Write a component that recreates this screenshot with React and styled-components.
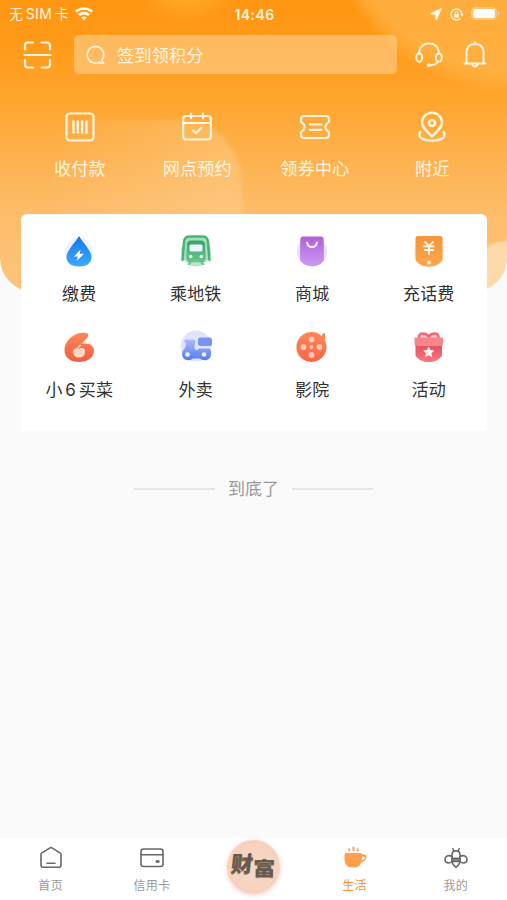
import React from "react";
import styled, { createGlobalStyle } from "styled-components";

const GlobalStyle = createGlobalStyle`
  * {
    box-sizing: border-box;
  }

  body {
    margin: 0;
    background: #fafafa;
    font-family: Inter, "Noto Sans CJK SC", sans-serif;
    color: #333;
  }

  svg {
    display: block;
    flex: none;
    overflow: visible;
  }
`;

const Page = styled.div`
  display: flex;
  flex-direction: column;
  width: 507px;
  height: 900px;
  overflow: hidden;
`;

const Header = styled.header`
  display: grid;
  height: 292px;
  flex: none;
  border-radius: 0 0 34px 34px;
  color: #fff4df;
  background:
    radial-gradient(circle at 507px 276px, rgba(252, 226, 190, 0.75) 33px, transparent 37px),
    radial-gradient(ellipse 46px 27px at 186px -5px, rgba(255, 182, 58, 0.6) 0%, rgba(255, 176, 48, 0.4) 60%, transparent 100%),
    radial-gradient(circle at 510px -95px, rgba(255, 183, 78, 0.7) 165px, rgba(255, 183, 78, 0.45) 176px, transparent 187px),
    linear-gradient(180deg, #ff9612 0px, #ff9a18 40px, #ffa42b 95px, #fdb04a 150px, #fdbc68 210px, #fdc57c 292px);

  > * {
    grid-area: 1 / 1;
    min-width: 0;
  }
`;

/* soft highlight behind the second shortcut */
const Glow = styled.div`
  width: 243px;
  height: 110px;
  margin-top: 120px;
  border-radius: 0 56px 0 0 / 0 72px 0 0;
  background: linear-gradient(100deg, transparent 50px, rgba(255, 214, 160, 0.38) 235px);
  filter: blur(2px);
`;

const HeaderContent = styled.div`
  isolation: isolate;
`;

const StatusBar = styled.div`
  display: grid;
  grid-template-columns: 1fr auto 1fr;
  align-items: center;
  height: 28px;
  padding: 0 7px 0 9px;
  font-size: 14.5px;
`;

const StatusGroup = styled.div`
  display: flex;
  align-items: center;
  justify-content: ${(props) => (props.$end ? "flex-end" : "flex-start")};
  gap: ${(props) => (props.$end ? "8px" : "6px")};
  line-height: 20px;
  white-space: nowrap;
`;

const Carrier = styled.span`
  font-size: 14px;
  letter-spacing: 0.4px;
  word-spacing: -2px;
`;

const Clock = styled.span`
  font-size: 14px;
  font-weight: 600;
  letter-spacing: 0.4px;
`;

const SearchRow = styled.div`
  display: flex;
  align-items: center;
  height: 39px;
  margin-top: 7px;
  padding: 0 19px 0 23px;
`;

const SearchBox = styled.div`
  display: flex;
  align-items: center;
  gap: 12px;
  width: 323px;
  height: 39px;
  margin: 0 18px 0 22px;
  padding: 0 12px;
  border-radius: 5px;
  background: rgba(255, 222, 178, 0.46);
  font-size: 17.3px;
`;

const HeaderIcons = styled.div`
  display: flex;
  align-items: center;
  gap: 20px;
`;

const QuickGrid = styled.nav`
  display: grid;
  grid-template-columns: repeat(4, 1fr);
  margin: 38px 16px 0 21px;
`;

const QuickItem = styled.div`
  display: flex;
  flex-direction: column;
  align-items: center;
  gap: 14px;
  font-size: 17.2px;
  line-height: 26px;
`;

const Card = styled.section`
  position: relative;
  display: grid;
  grid-template-columns: repeat(4, 1fr);
  grid-auto-rows: 95px;
  width: 466px;
  height: 217px;
  flex: none;
  margin: -78px 0 0 21px;
  padding-top: 20px;
  border-radius: 6px 6px 2px 2px;
  background: #fff;
`;

const ServiceItem = styled.div`
  display: flex;
  flex-direction: column;
  align-items: center;
  gap: 13px;
  padding-top: ${(props) => (props.$lower ? "1px" : "0")};
  font-size: 17px;
  line-height: 26px;
  letter-spacing: 0.2px;
  word-spacing: -2.3px;
`;

const EndLine = styled.div`
  display: flex;
  align-items: center;
  justify-content: center;
  gap: 13px;
  margin-top: 45px;
  color: #999;
  font-size: 17px;
  line-height: 26px;

  &::before,
  &::after {
    content: "";
    width: 81px;
    height: 2px;
    background: #e6e6e6;
  }
`;

const TabBar = styled.footer`
  display: grid;
  grid-template-columns: repeat(5, 101.3px);
  height: 62px;
  margin-top: auto;
  background: #fff;
`;

const Tab = styled.div`
  display: flex;
  flex-direction: column;
  align-items: center;
  gap: 8px;
  padding-top: 8px;
  color: ${(props) => (props.$active ? "#f99238" : "#999")};
  font-size: 12px;
  line-height: 18px;
  letter-spacing: 0.3px;
`;

const WealthButton = styled.div`
  display: flex;
  align-items: center;
  justify-content: center;
  width: 53px;
  height: 54px;
  margin: 2px auto 0;
  border-radius: 50%;
  background: radial-gradient(circle at 50% 55%, #f5d9c7 0%, #f8d1bf 65%, #f9c5b6 100%);
  box-shadow: 0 1px 4px rgba(250, 150, 135, 0.5);
  color: #675a4f;
  font-size: 22px;
  font-weight: 900;
  line-height: 30px;
  text-shadow: 0 1px 0 #a59382;
`;

const WealthChar = styled.span`
  transform: ${(props) => (props.$low ? "translateY(1px) scaleY(0.85)" : "translateY(-3px) skewX(-6deg)")};
`;

const line = {
  fill: "none",
  stroke: "#fff4df",
  strokeWidth: 2.2,
  strokeLinecap: "round",
  strokeLinejoin: "round",
};

const WifiIcon = () => (
  <svg width="18" height="14" viewBox="0 0 18 14" fill="none" stroke="#fff8e8" strokeWidth="2.6">
    <path d="M.9 4.8C5.5.4 12.5.4 17.1 4.8" />
    <path d="M4 8.1C6.8 5.4 11.2 5.4 14 8.1" />
    <path d="M9 13.6 6.2 10.6C7.7 9.2 10.3 9.2 11.8 10.6Z" fill="#fff8e8" stroke="none" />
  </svg>
);

const LocationIcon = () => (
  <svg width="12" height="12" viewBox="0 0 12 12" fill="#fff8e8">
    <path d="M11.7.3 6.9 11.3Q6 12.3 5.7 10.9V6.4H1.1Q-.3 6 .8 5.1Z" stroke="#fff8e8" strokeWidth=".5" />
  </svg>
);

const RotationLockIcon = () => (
  <svg width="13" height="13" viewBox="0 0 13 13" fill="none" stroke="#fff4df" strokeWidth="1.3">
    <path d="M10.3 10.5A5.5 5.5 0 1 1 12 6.5" />
    <path d="M10.1 6.1H13.6L11.9 8.5Z" fill="#fff4df" stroke="none" />
    <rect x="4" y="6" width="5" height="3.7" rx=".6" fill="#fff4df" stroke="none" />
    <path d="M5 6V4.9A1.5 1.5 0 0 1 8 4.9V6" strokeWidth="1" />
  </svg>
);

const BatteryIcon = () => (
  <svg width="29" height="14" viewBox="0 0 29 14">
    <rect x=".5" y=".5" width="25" height="12" rx="4" fill="#ffc36f" stroke="#ffcb84" />
    <path d="M27 4.5Q30 6.5 27 9Z" fill="#ffd090" />
    <rect x="2.3" y="2" width="21.5" height="9" rx="2" fill="#fff" />
  </svg>
);

const ScanIcon = () => (
  <svg width="29" height="28" viewBox="0 0 29 28" {...line}>
    <path d="M2 8.5V4.5Q2 1.5 5 1.5H10M18.5 1.5H24Q27 1.5 27 4.5V8.5M2 19V23.5Q2 26.5 5 26.5H10M18.5 26.5H24Q27 26.5 27 23.5V19M1.5 14H27.5" />
  </svg>
);

const SearchIcon = () => (
  <svg width="19" height="20" viewBox="0 0 19 20" {...line} strokeWidth="1.5">
    <path d="M14 16.8A8.3 8.3 0 1 1 17.5 12C17 13.5 16.5 14.5 15.8 15.3L17.7 18.3H14" />
  </svg>
);

const HeadsetIcon = () => (
  <svg width="28" height="26" viewBox="0 0 28 26" {...line} strokeWidth="1.9">
    <path d="M4 12V10.5C5 4 9 1.5 14 1.5S23 4 24 10.5V12" />
    <ellipse cx="4.2" cy="15.5" rx="3" ry="4.2" />
    <ellipse cx="23.8" cy="15.5" rx="3" ry="4.2" />
    <path d="M23 19.7C21.5 22 19 23 15 23.2" />
    <circle cx="13.8" cy="23.2" r="1" fill="#fff4df" />
  </svg>
);

const BellIcon = () => (
  <svg width="24" height="27" viewBox="0 0 24 27" {...line} strokeWidth="2">
    <path d="M1.5 22.5H22.5M3.5 22V12C3.5 6 7 3 12 3S20.5 6 20.5 12V22M12 3V1.5" />
    <path d="M9.5 23.5C10 26 14 26 14.5 23.5" />
  </svg>
);

const BarcodeIcon = () => (
  <svg width="30" height="30" viewBox="0 0 30 30" {...line}>
    <rect x="1.5" y="1.5" width="27" height="27" rx="3.5" />
    <path d="M8.5 8.5V21.5M12.8 8.5V21.5M17.1 8.5V21.5M21.4 8.5V21.5" strokeWidth="2.4" strokeLinecap="butt" />
  </svg>
);

const CalendarIcon = () => (
  <svg width="30" height="30" viewBox="0 0 30 30" {...line}>
    <rect x="1.2" y="4" width="27.6" height="23.5" rx="3" />
    <path d="M1.5 11H28.5M9 1.7V6.3M21 1.7V6.3M11 18.5 14 21.2 19.5 15.8" />
  </svg>
);

const TicketIcon = () => (
  <svg width="30" height="30" viewBox="0 0 30 30" {...line}>
    <path d="M4 4H26Q29 4 29 7V9.5Q29 10.5 27.5 11.2C24.5 13 24.5 17 27.5 18.8Q29 19.5 29 20.5V23Q29 26 26 26H4Q1 26 1 23V20.5Q1 19.5 2.5 18.8C5.5 17 5.5 13 2.5 11.2Q1 10.5 1 9.5V7Q1 4 4 4Z" />
    <path d="M10 12.3H21.5M10 17.8H21.5" />
  </svg>
);

const NearbyIcon = () => (
  <svg width="28" height="30" viewBox="0 0 28 30" {...line} strokeWidth="2.4">
    <path d="M14 24.5C9 19.5 4 15.5 4 10.3A10 9.5 0 0 1 24 10.3C24 15.5 19 19.5 14 24.5Z" />
    <circle cx="14" cy="11" r="3" />
    <path d="M2.3 20C-1.5 26.5 7 28.7 14 28.7S29.5 26.5 25.7 20" />
  </svg>
);

const Gradient = ({ id, from, to }) => (
  <defs>
    <linearGradient id={id} x1="0" y1="0" x2="0" y2="1">
      <stop stopColor={from} />
      <stop offset="1" stopColor={to} />
    </linearGradient>
  </defs>
);

const UtilityIcon = () => (
  <svg width="34" height="34" viewBox="0 0 34 34">
    <Gradient id="drop" from="#1478ef" to="#3da9fc" />
    <circle cx="17" cy="18" r="14.5" fill="#f3f3ff" />
    <path d="M17 2C21 8.5 29.5 17 29.5 23C29.5 29.5 24 32.5 17 32.5S4.5 29.5 4.5 23C4.5 17 13 8.5 17 2Z" fill="url(#drop)" />
    <path d="M18.5 15.5 12 22.5H16L15 26.8 22 19.7H17.6Z" fill="#fff" />
  </svg>
);

const MetroIcon = () => (
  <svg width="34" height="34" viewBox="0 0 34 34">
    <Gradient id="train" from="#35a568" to="#70c993" />
    <circle cx="17" cy="17.5" r="15" fill="#c7ecd5" />
    <path d="M3.5 26 5 8Q5.5 2.5 10 2.5H24Q28.5 2.5 29 8L30.5 26" fill="#a5dfbb" stroke="#46b477" strokeWidth="2.5" strokeLinecap="round" />
    <path d="M12 6.5H22Q25.5 6.5 26 10L26.7 24.5Q26.7 28 24 28L25.5 31H22L20.5 28.5H13.5L12 31H8.5L10 28Q7.3 28 7.3 24.5L8 10Q8.5 6.5 12 6.5Z" fill="url(#train)" />
    <rect x="10.5" y="10.5" width="13" height="7" rx="1.5" fill="#edf2ff" />
    <circle cx="11.7" cy="22.5" r="1.7" fill="#effff5" />
    <circle cx="22.3" cy="22.5" r="1.7" fill="#effff5" />
    <path d="M11 31 12.5 28.5H21.5L23 31Q17 33.5 11 31Z" fill="#b6e5c7" />
  </svg>
);

const MallIcon = () => (
  <svg width="34" height="34" viewBox="0 0 34 34">
    <Gradient id="bag" from="#ad61d8" to="#cc9bf3" />
    <circle cx="17" cy="17.5" r="15" fill="#eadcfb" />
    <path d="M8 2.5H26Q28.5 2.5 28.7 5.5L29 26C26 30.5 22 32.3 17 32.3S8 30.5 5 26L5.3 5.5Q5.5 2.5 8 2.5Z" fill="url(#bag)" />
    <path d="M12 8.5C13 14.5 21 14.5 22 8.5" fill="none" stroke="#f7e9ff" strokeWidth="2" strokeLinecap="round" />
  </svg>
);

const RechargeIcon = () => (
  <svg width="34" height="34" viewBox="0 0 34 34">
    <Gradient id="phone" from="#f49538" to="#ffa64c" />
    <circle cx="17" cy="17" r="15" fill="#ffefdf" />
    <path d="M6 2H28Q30.5 2 30.5 4.5V26C27 31 22.5 32.7 17 32.7S7 31 3.5 26V4.5Q3.5 2 6 2Z" fill="url(#phone)" />
    <path d="M12.5 7.5 17 12 21.5 7.5M11.5 12.3H22.5M12 16H22M17 12V21" fill="none" stroke="#fff8ee" strokeWidth="1.8" />
    <circle cx="17" cy="28.5" r="1.9" fill="#fff3df" />
  </svg>
);

const GroceryIcon = () => (
  <svg width="34" height="34" viewBox="0 0 34 34">
    <Gradient id="six" from="#ff875a" to="#ee6042" />
    <circle cx="16" cy="17" r="14" fill="#fff3eb" />
    <path d="M24 3C27 3.5 27 6 24.5 8.5L19.5 14C26 12 32 15 32 20.5C32 28 25 32 17.5 32C8 32 2.5 27.5 2.5 20C2.5 12 10 3.5 21 2.8Q23 2.5 24 3Z" fill="url(#six)" />
    <path d="M17 18.8C21 16.5 23.5 19 23 22.5C22.6 26 20 27.8 17 27.5C13.5 27.8 11.5 25.5 11.2 22.5C11 18.5 13.8 17.5 17 18.8Z" fill="#ffd8c5" />
    <path d="M16.5 18.5C16 16.5 17.5 15.5 19 15.5" fill="none" stroke="#ffd8c5" strokeWidth="1.5" />
  </svg>
);

const DeliveryIcon = () => (
  <svg width="34" height="34" viewBox="0 0 34 34">
    <Gradient id="scooter" from="#aab9fb" to="#557cf0" />
    <circle cx="17" cy="16" r="15.5" fill="#e2e4fc" />
    <path d="M6 9.5H14Q16.5 9.5 16 12.5L15.5 18Q16.5 21.5 20.5 18.5H30.5Q32.5 20 32 24C32 27.5 29.5 30.3 26 30.3Q23 30.5 21 28.5H14Q12 30.5 9 30.3C5 30 3 27.5 3 23.5Q3.3 20 6 18L7 13Q4 11 6 9.5Z" fill="url(#scooter)" />
    <rect x="19" y="7.5" width="14" height="8.5" rx="2.5" fill="#7892f5" />
    <circle cx="8.5" cy="24.5" r="2.3" fill="#edf2ff" />
    <circle cx="25" cy="24.5" r="2.3" fill="#edf2ff" />
  </svg>
);

const CinemaIcon = () => (
  <svg width="34" height="34" viewBox="0 0 34 34">
    <Gradient id="reel" from="#ff8658" to="#f56749" />
    <circle cx="15.5" cy="18" r="15" fill="#ffeee8" />
    <path d="M26 7 28.5 3H30V8.5L28 11Z" fill="#ff815a" />
    <circle cx="16.5" cy="17" r="15" fill="url(#reel)" />
    <g fill="#ffc8b4">
      <circle cx="16.5" cy="9.5" r="2.9" />
      <circle cx="8.5" cy="17" r="2.9" />
      <circle cx="24.5" cy="17" r="2.9" />
      <circle cx="16.5" cy="25" r="2.9" />
      <circle cx="16.5" cy="17" r="1.9" />
    </g>
  </svg>
);

const GiftIcon = () => (
  <svg width="34" height="34" viewBox="0 0 34 34">
    <Gradient id="gift" from="#e44e5e" to="#fb7781" />
    <path d="M7 10V7Q7 3.5 11 3.5Q15 3.5 16.7 7Q18.5 3.5 22.5 3.5Q26.5 3.5 26.5 7V10" fill="#fbc3c5" stroke="#ee6877" strokeWidth="2.5" />
    <path d="M3.5 14H30V26C26 30.5 22 32 16.7 32S7.5 30.5 3.5 26Z" fill="url(#gift)" />
    <path d="M3 7.5H30.5Q31 7.5 31 8.5V14Q31 16 28.5 16H5Q2.5 16 2.5 14V8.5Q2.5 7.5 3 7.5Z" fill="#f6858b" />
    <path d="m16.7 16.5 1.7 3.5 3.9.6-2.8 2.7.7 3.9-3.5-1.9-3.5 1.9.7-3.9-2.8-2.7 3.9-.6Z" fill="#fff4ed" />
  </svg>
);

const HomeIcon = () => (
  <svg width="24" height="23" viewBox="0 0 24 23" {...line} stroke="#686868" strokeWidth="1.6">
    <path d="M2 8.3Q2 7.5 3 6.9L11 1.9Q12 1.3 13 1.9L21 6.9Q22 7.5 22 8.3V19Q22 21.3 19.7 21.3H4.3Q2 21.3 2 19ZM8 17.3H16" />
  </svg>
);

const CardIcon = () => (
  <svg width="24" height="23" viewBox="0 0 24 23" {...line} stroke="#686868" strokeWidth="1.6">
    <rect x="1" y="3" width="22" height="17.5" rx="2.5" />
    <path d="M1 8.7H23" />
    <rect x="16.5" y="14.7" width="2.6" height="1.6" fill="#686868" strokeWidth="1" />
  </svg>
);

const CupIcon = () => (
  <svg width="24" height="23" viewBox="0 0 24 23">
    <path d="M3 7H17.5Q19 7 19 8.5C26 7 24 16 18 16.5Q16.5 21.5 11.5 21.5H9.5C4 21.5 1.5 18 1.5 13V8.5Q1.5 7 3 7Z" fill="#ff9f4e" />
    <path d="M19.2 10.5Q22 10 21.5 12.2Q21 14 18.9 14.5Z" fill="#fff" />
    <path d="M6.2 3.2V4.5M10.5 1.5V4.5M14.8 3.2V4.5" stroke="#ffa35a" strokeWidth="2" strokeLinecap="round" />
  </svg>
);

const BeeIcon = () => (
  <svg width="24" height="23" viewBox="0 0 24 23" {...line} stroke="#686868" strokeWidth="1.6">
    <path d="M8 9C8 3.5 16 3.5 16 9V16Q15.5 18.5 12 21.5Q8.5 18.5 8 16ZM9.8 5.2 8.8 2.8M14.2 5.2 15.2 2.8" />
    <path d="M8 10.5C4.5 8.5 1 10 1 13.5C1 17 5 18.2 8 15.5M16 10.5C19.5 8.5 23 10 23 13.5C23 17 19 18.2 16 15.5" />
    <path d="M8.3 12.2H15.7V15.5H8.3Z" fill="#888" />
  </svg>
);

const quickItems = [
  { label: "收付款", icon: <BarcodeIcon /> },
  { label: "网点预约", icon: <CalendarIcon /> },
  { label: "领券中心", icon: <TicketIcon /> },
  { label: "附近", icon: <NearbyIcon /> },
];

const services = [
  { label: "缴费", icon: <UtilityIcon /> },
  { label: "乘地铁", icon: <MetroIcon /> },
  { label: "商城", icon: <MallIcon /> },
  { label: "充话费", icon: <RechargeIcon /> },
  { label: "小 6 买菜", icon: <GroceryIcon /> },
  { label: "外卖", icon: <DeliveryIcon /> },
  { label: "影院", icon: <CinemaIcon /> },
  { label: "活动", icon: <GiftIcon /> },
];

export default function App() {
  return (
    <>
      <GlobalStyle />
      <Page>
        <Header>
          <Glow />
          <HeaderContent>
            <StatusBar>
              <StatusGroup>
                <Carrier>无 SIM 卡</Carrier>
                <WifiIcon />
              </StatusGroup>
              <Clock>14:46</Clock>
              <StatusGroup $end>
                <LocationIcon />
                <RotationLockIcon />
                <BatteryIcon />
              </StatusGroup>
            </StatusBar>
            <SearchRow>
              <ScanIcon />
              <SearchBox>
                <SearchIcon />
                <span>签到领积分</span>
              </SearchBox>
              <HeaderIcons>
                <HeadsetIcon />
                <BellIcon />
              </HeaderIcons>
            </SearchRow>
            <QuickGrid>
              {quickItems.map((item) => (
                <QuickItem key={item.label}>
                  {item.icon}
                  <span>{item.label}</span>
                </QuickItem>
              ))}
            </QuickGrid>
          </HeaderContent>
        </Header>
        <Card>
          {services.map((item, index) => (
            <ServiceItem key={item.label} $lower={index > 3}>
              {item.icon}
              <span>{item.label}</span>
            </ServiceItem>
          ))}
        </Card>
        <EndLine>到底了</EndLine>
        <TabBar>
          <Tab>
            <HomeIcon />
            <span>首页</span>
          </Tab>
          <Tab>
            <CardIcon />
            <span>信用卡</span>
          </Tab>
          <WealthButton>
            <WealthChar>财</WealthChar>
            <WealthChar $low>富</WealthChar>
          </WealthButton>
          <Tab $active>
            <CupIcon />
            <span>生活</span>
          </Tab>
          <Tab>
            <BeeIcon />
            <span>我的</span>
          </Tab>
        </TabBar>
      </Page>
    </>
  );
}
